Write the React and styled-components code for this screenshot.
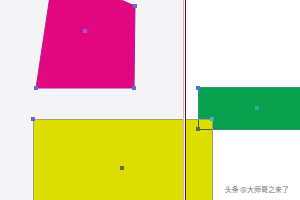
import styled, { createGlobalStyle } from "styled-components";

const GlobalStyle = createGlobalStyle`
  html, body {
    margin: 0;
    padding: 0;
    background: #ffffff;
  }
`;

const Stage = styled.div`
  position: relative;
  width: 300px;
  height: 200px;
  display: flex;
  overflow: hidden;
  font-family: "Noto Sans CJK SC", "Noto Sans", sans-serif;
`;

const Pasteboard = styled.div`
  width: 183px;
  background-color: #f4f3f6;
`;

const PageEdge = styled.div`
  display: flex;
  width: 3px;
  height: 100%;
  z-index: 5;
  & span:first-child {
    width: 1px;
    background-color: #e8a9b2;
  }
  & span:nth-child(2) {
    width: 1px;
    background-color: #fbeff1;
  }
  & span:last-child {
    width: 1px;
    background-color: #3b2626;
  }
`;

const Page = styled.div`
  flex: 1;
  background-color: #ffffff;
`;

const Layer = styled.div`
  position: absolute;
  inset: 0;
  pointer-events: none;
  z-index: ${(p) => p.$z || 1};
`;

const Rect = styled.div`
  position: absolute;
  left: ${(p) => p.$x}px;
  top: ${(p) => p.$y}px;
  width: ${(p) => p.$w}px;
  height: ${(p) => p.$h}px;
  background-color: ${(p) => p.$fill};
  border: 1px solid ${(p) => p.$stroke};
  box-sizing: border-box;
`;

const Watermark = styled.span`
  position: absolute;
  right: 11px;
  bottom: 7px;
  z-index: 9;
  font-size: 7px;
  line-height: 1;
  color: #747474;
  text-shadow: 0 0 2px #ffffff;
`;

// selection handles of the drawing tool: [x, y, colour]
const handles = [
  [135, 6, "#5b6fd6"],
  [134, 88, "#5b6fd6"],
  [36, 88, "#5b6fd6"],
  [85, 31, "#8c5cd2"],
  [198, 88, "#5b6fd6"],
  [257, 108, "#3f9fa8"],
  [33, 119, "#5b6fd6"],
  [212, 119, "#5fa0c8"],
  [198, 129, "#5d6a55"],
  [122, 168, "#6b6a3a"],
];

function Drawing({ children }) {
  return (
    <svg
      width="300"
      height="200"
      viewBox="0 0 300 200"
      style={{ position: "absolute", left: 0, top: 0 }}
    >
      {children}
    </svg>
  );
}

export default function App() {
  return (
    <>
      <GlobalStyle />
      <Stage>
        <Pasteboard />
        <PageEdge>
          <span />
          <span />
          <span />
        </PageEdge>
        <Page />

        <Layer $z={1}>
          <Drawing>
            <polygon
              points="50,-4 112,-4 135,6 134,88 36,88"
              fill="#e3077f"
              stroke="#b51c90"
              strokeWidth="1"
            />
          </Drawing>
        </Layer>
        <Layer $z={2}>
          <Rect $x={198} $y={87} $w={122} $h={43} $fill="#07a04f" $stroke="#2e9a6e" />
        </Layer>
        <Layer $z={3}>
          <Rect $x={33} $y={119} $w={180} $h={100} $fill="#dedd00" $stroke="#a3a26a" />
        </Layer>
        <Layer $z={8}>
          <Drawing>
            <path d="M198.5 120 V129.5 H212" fill="none" stroke="#4f5a3a" strokeWidth="1" />
            {handles.map(([x, y, c]) => (
              <rect key={`${x}-${y}`} x={x - 2} y={y - 2} width="4" height="4" fill={c} />
            ))}
          </Drawing>
        </Layer>
        <Watermark>头条 @大师哥之来了</Watermark>
      </Stage>
    </>
  );
}
